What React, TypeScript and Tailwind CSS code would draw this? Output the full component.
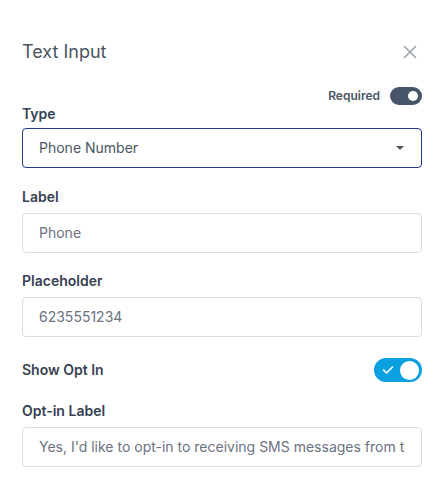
import { useState } from 'react';

const font = { fontFamily: 'Inter, "Noto Sans", sans-serif' };

function Field({ label, value }: { label: string; value: string }) {
  return (
    <div className="flex flex-col">
      <label className="text-sm font-semibold text-[#374151] leading-5">{label}</label>
      <div className="mt-[6px] h-10 flex items-center px-4 border border-[#d9dce1] rounded-[4px] bg-white overflow-hidden">
        <span className="text-sm text-[#6b7280] whitespace-nowrap overflow-hidden">{value}</span>
      </div>
    </div>
  );
}

export default function App() {
  const [required, setRequired] = useState(true);
  const [optIn, setOptIn] = useState(true);

  return (
    <div className="w-[446px] h-[479px] bg-white overflow-hidden" style={font}>
      <div className="pl-[22px] pr-[24px] pt-[40px]">
        {/* 헤더 */}
        <div className="flex items-center justify-between h-6">
          <h2 className="text-lg text-[#4b5563] leading-6">Text Input</h2>
          <button className="text-[#9ca3af] mr-[5px]">
            <svg width="14" height="14" viewBox="0 0 14 14" fill="none" stroke="currentColor" strokeWidth="1.6">
              <path d="M1 1L13 13M13 1L1 13" />
            </svg>
          </button>
        </div>

        {/* Required */}
        <div className="flex items-center justify-end gap-[10px] mt-[22px] h-5">
          <span className="text-xs font-semibold text-[#4b5563]">Required</span>
          <button
            onClick={() => setRequired(!required)}
            className="w-8 h-[18px] rounded-full bg-[#475569] flex items-center justify-end pr-[4px]"
          >
            <span className="w-[10px] h-[10px] rounded-full bg-white" />
          </button>
        </div>

        {/* Type */}
        <div className="flex flex-col -mt-[2px]">
          <label className="text-sm font-semibold text-[#374151] leading-5">Type</label>
          <div className="mt-[4px] h-10 flex items-center justify-between pl-4 pr-[17px] border border-[#1e3a8a] rounded-[4px]">
            <span className="text-sm text-[#4b5563]">Phone Number</span>
            <svg width="8" height="4" viewBox="0 0 8 4" fill="#4b5563">
              <path d="M0 0L8 0L4 4Z" />
            </svg>
          </div>
        </div>

        <div className="mt-[19px]">
          <Field label="Label" value="Phone" />
        </div>
        <div className="mt-[18px]">
          <Field label="Placeholder" value="6235551234" />
        </div>

        {/* Show Opt In */}
        <div className="flex items-center justify-between mt-[21px] h-6">
          <span className="text-sm font-semibold text-[#374151]">Show Opt In</span>
          <button
            onClick={() => setOptIn(!optIn)}
            className="w-12 h-6 rounded-full bg-[#0ba0e0] flex items-center justify-between pl-[8px] pr-[3px]"
          >
            <svg width="12" height="10" viewBox="0 0 12 10" fill="none" stroke="white" strokeWidth="1.6" strokeLinecap="round" strokeLinejoin="round">
              <path d="M1.5 5L4.5 8L10.5 2" />
            </svg>
            <span className="w-[19px] h-[19px] rounded-full bg-white" />
          </button>
        </div>

        <div className="mt-[19px]">
          <Field label="Opt-in Label" value="Yes, I'd like to opt-in to receiving SMS messages from the business." />
        </div>
      </div>
    </div>
  );
}
